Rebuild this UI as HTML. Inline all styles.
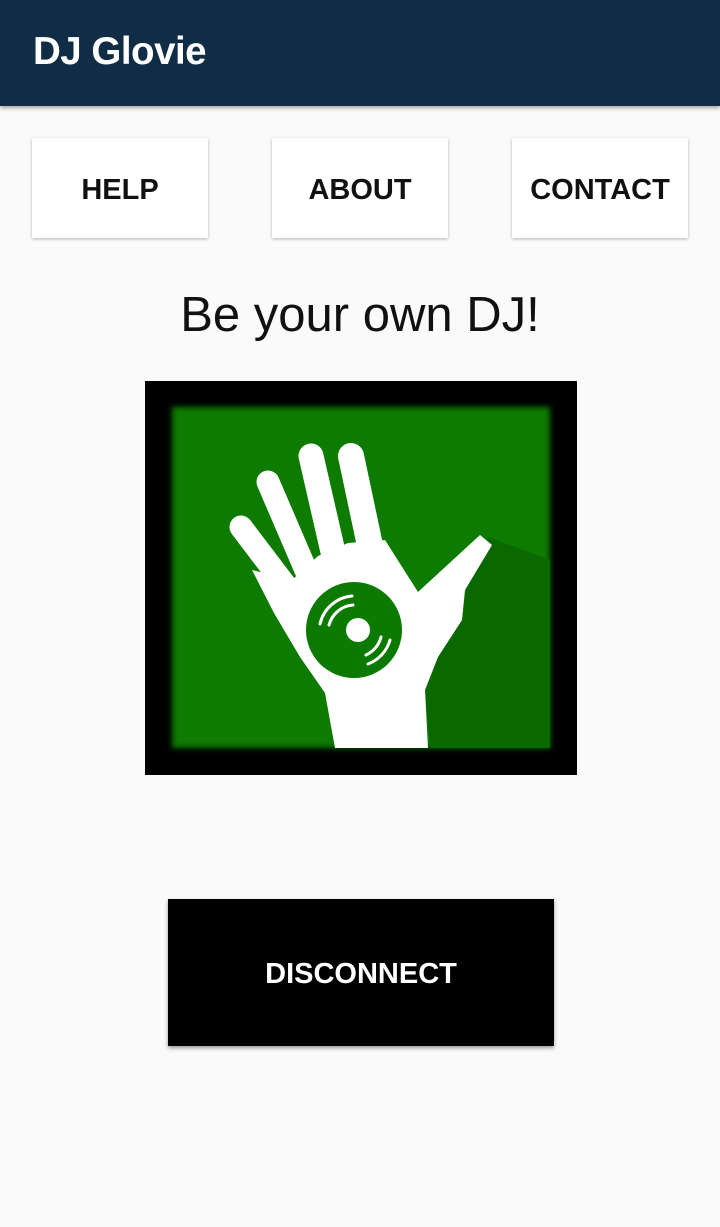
<!DOCTYPE html>
<html><head><style>
body{margin:0;width:720px;height:1227px;background:#fafafa;font-family:"Liberation Sans",Roboto,sans-serif;position:relative;overflow:hidden}
.bar{position:absolute;left:0;top:0;width:720px;height:106px;background:#102d45;box-shadow:0 2px 4px rgba(0,0,0,.35)}
.bar span{position:absolute;left:33px;top:30px;color:#fff;font-size:38.5px;font-weight:bold;letter-spacing:-0.5px}
.btn{position:absolute;top:138px;width:176px;height:100px;background:#fff;box-shadow:0 1px 3px rgba(0,0,0,.3);display:flex;align-items:center;justify-content:center;font-size:29px;font-weight:bold;color:#111;padding-top:4px;box-sizing:border-box}
h1{position:absolute;top:287px;left:0;width:720px;text-align:center;margin:0;font-weight:normal;font-size:49px;color:#111}
.dis{position:absolute;left:168px;top:899px;width:386px;height:147px;background:#000;color:#fff;font-size:29px;font-weight:bold;display:flex;align-items:center;justify-content:center;box-shadow:0 2px 4px rgba(0,0,0,.4);padding-top:4px;box-sizing:border-box}
</style></head><body>
<div class="bar"><span>DJ Glovie</span></div>
<div class="btn" style="left:32px">HELP</div>
<div class="btn" style="left:272px">ABOUT</div>
<div class="btn" style="left:512px">CONTACT</div>
<h1>Be your own DJ!</h1>
<svg style="position:absolute;left:0;top:0" width="720" height="1227">
<defs><filter id="b"><feGaussianBlur stdDeviation="3"/></filter></defs>
<rect x="145" y="381" width="432" height="394" fill="#000"/>
<rect x="172" y="407" width="378" height="341" fill="#0c7a00" filter="url(#b)"/>
<polygon points="488,537 550,560 550,748 430,748 425,690" fill="#0a6800"/>
<g stroke="#fff" stroke-linecap="round" fill="none">
<line x1="241" y1="527" x2="285" y2="585" stroke-width="23"/>
<line x1="268" y1="482" x2="308" y2="575" stroke-width="23"/>
<line x1="311" y1="456" x2="336" y2="565" stroke-width="25"/>
<line x1="351" y1="456" x2="372" y2="555" stroke-width="26"/>
</g>
<polygon points="252,570 292,580 318,556 348,543 385,540 418,592 480,535 492,545 465,590 462,620 438,657 425,690 428,748 335,748 325,693 300,657 274,613" fill="#fff"/>
<circle cx="354" cy="630" r="48" fill="#0c7a00"/>
<circle cx="358" cy="630" r="12" fill="#fff"/>
<g stroke="#fff" stroke-width="3" fill="none" stroke-linecap="round">
<path d="M320,624 A36,36 0 0 1 352,596"/>
<path d="M329,625 A27,27 0 0 1 353,605"/>
<path d="M390,640 A36,36 0 0 1 368,664"/>
<path d="M381,637 A27,27 0 0 1 366,655"/>
</g>
</svg>
<div class="dis">DISCONNECT</div>
</body></html>
